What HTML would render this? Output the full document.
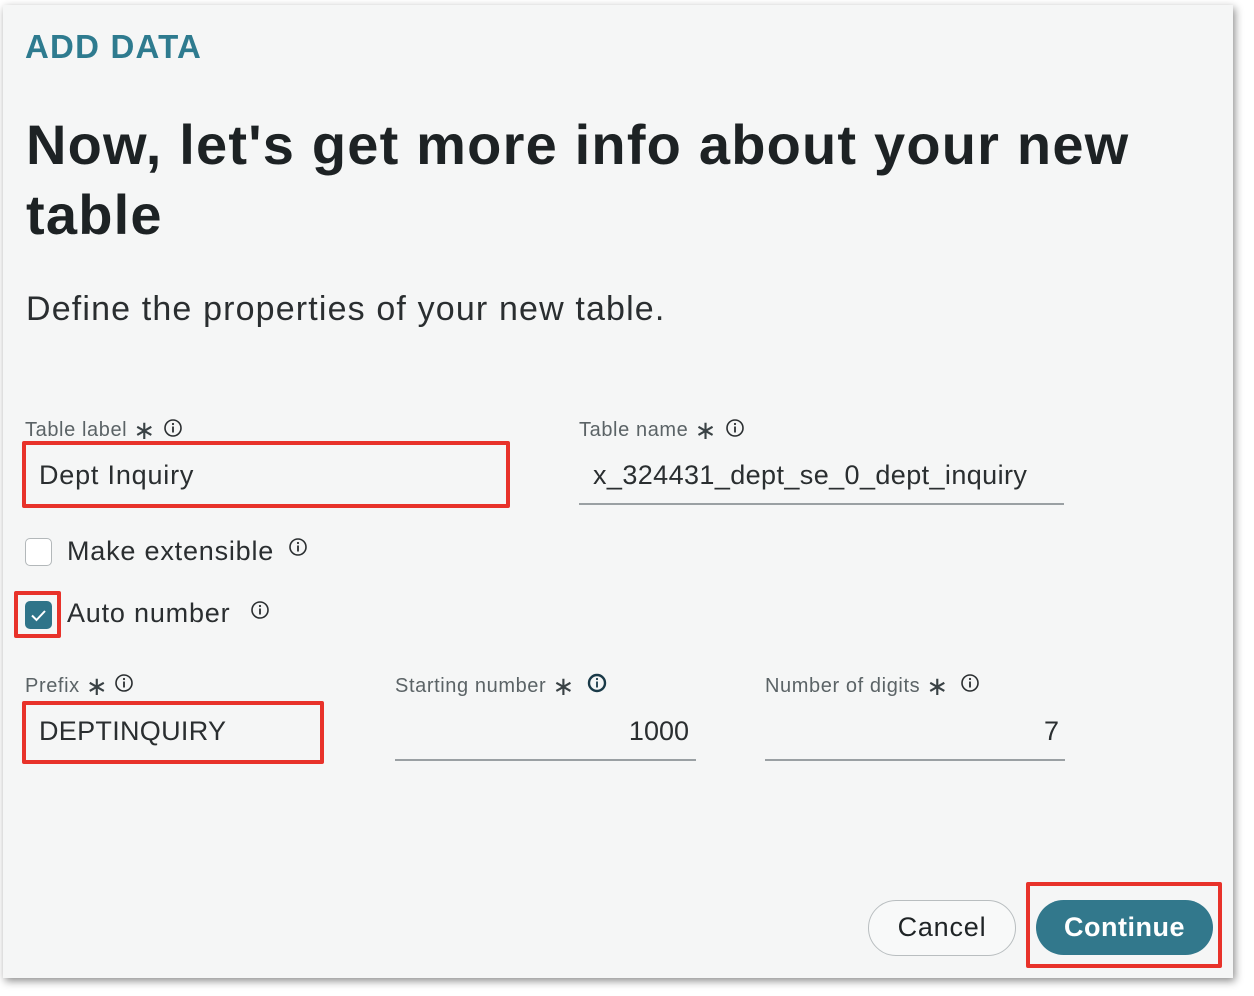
<!DOCTYPE html>
<html><head><meta charset="utf-8"><style>
*{margin:0;padding:0;box-sizing:border-box}
body{width:1254px;height:996px;background:#fff;position:relative;overflow:hidden;font-family:"Liberation Sans",sans-serif;color:#1f2426}
.panel{position:absolute;left:3px;top:5px;width:1230px;height:973px;background:#f5f6f6;box-shadow:2px 3px 8px rgba(0,0,0,.45)}
.a{position:absolute;white-space:nowrap}
.lbl{font-size:20px;color:#5b6366;letter-spacing:0.6px}
.lbl b{font-weight:normal;font-size:26px;color:#3a4245;vertical-align:-3px}
.val{font-size:27px;color:#2a2e30;letter-spacing:0.8px}
.line{position:absolute;height:2px;background:#9aa0a3}
.red{position:absolute;border:4px solid #e8322a;border-radius:2px}
svg{position:absolute}
</style></head><body>
<div class="panel"></div>
<div class="a" style="left:25px;top:28px;font-size:33px;font-weight:bold;color:#2e7b8f;letter-spacing:1.2px">ADD DATA</div>
<div class="a" style="left:26px;top:110px;font-size:56px;font-weight:bold;color:#1d2224;line-height:70px;letter-spacing:1.2px">Now, let's get more info about your new<br>table</div>
<div class="a" style="left:26px;top:290px;font-size:34px;color:#2a2e30;letter-spacing:1.15px">Define the properties of your new table.</div>

<div class="a lbl" style="left:25px;top:415px">Table label <b>∗</b></div>
<svg style="left:163px;top:418px" width="20" height="20" viewBox="0 0 20 20"><circle cx="10" cy="10" r="8" fill="none" stroke="#2a2e30" stroke-width="1.6"/><rect x="9.1" y="8.5" width="1.8" height="6" fill="#2a2e30"/><circle cx="10" cy="6" r="1.1" fill="#2a2e30"/></svg>
<div class="red" style="left:22px;top:441px;width:488px;height:67px"></div>
<div class="a val" style="left:39px;top:460px">Dept Inquiry</div>

<div class="a lbl" style="left:579px;top:415px">Table name <b>∗</b></div>
<svg style="left:725px;top:418px" width="20" height="20" viewBox="0 0 20 20"><circle cx="10" cy="10" r="8" fill="none" stroke="#2a2e30" stroke-width="1.6"/><rect x="9.1" y="8.5" width="1.8" height="6" fill="#2a2e30"/><circle cx="10" cy="6" r="1.1" fill="#2a2e30"/></svg>
<div class="a val" style="left:593px;top:460px;letter-spacing:0.4px">x_324431_dept_se_0_dept_inquiry</div>
<div class="line" style="left:579px;top:503px;width:485px"></div>

<div class="a" style="left:25px;top:538px;width:27px;height:28px;border:1.5px solid #b3b8ba;border-radius:5px;background:#fff"></div>
<div class="a val" style="left:67px;top:536px">Make extensible</div>
<svg style="left:288px;top:537px" width="20" height="20" viewBox="0 0 20 20"><circle cx="10" cy="10" r="8" fill="none" stroke="#2a2e30" stroke-width="1.6"/><rect x="9.1" y="8.5" width="1.8" height="6" fill="#2a2e30"/><circle cx="10" cy="6" r="1.1" fill="#2a2e30"/></svg>

<div class="red" style="left:14px;top:591px;width:47px;height:47px"></div>
<div class="a" style="left:25px;top:601px;width:27px;height:28px;border-radius:5px;background:#2f7489"></div>
<svg style="left:25px;top:601px" width="27" height="28" viewBox="0 0 27 28"><path d="M7 14.5l4.5 4.5 8.5-9" fill="none" stroke="#fff" stroke-width="2"/></svg>
<div class="a val" style="left:67px;top:598px">Auto number</div>
<svg style="left:250px;top:600px" width="20" height="20" viewBox="0 0 20 20"><circle cx="10" cy="10" r="8" fill="none" stroke="#2a2e30" stroke-width="1.6"/><rect x="9.1" y="8.5" width="1.8" height="6" fill="#2a2e30"/><circle cx="10" cy="6" r="1.1" fill="#2a2e30"/></svg>

<div class="a lbl" style="left:25px;top:671px">Prefix <b>∗</b></div>
<svg style="left:114px;top:673px" width="20" height="20" viewBox="0 0 20 20"><circle cx="10" cy="10" r="8" fill="none" stroke="#2a2e30" stroke-width="1.6"/><rect x="9.1" y="8.5" width="1.8" height="6" fill="#2a2e30"/><circle cx="10" cy="6" r="1.1" fill="#2a2e30"/></svg>
<div class="red" style="left:22px;top:701px;width:302px;height:63px"></div>
<div class="a val" style="left:39px;top:716px;letter-spacing:0.3px">DEPTINQUIRY</div>

<div class="a lbl" style="left:395px;top:671px">Starting number <b>∗</b></div>
<svg style="left:587px;top:673px" width="20" height="20" viewBox="0 0 20 20"><circle cx="10" cy="10" r="8" fill="none" stroke="#1a3a48" stroke-width="2.4"/><rect x="9.1" y="8.5" width="1.8" height="6" fill="#1a3a48"/><circle cx="10" cy="6" r="1.1" fill="#1a3a48"/></svg>
<div class="a val" style="left:395px;top:716px;width:294px;text-align:right;letter-spacing:0">1000</div>
<div class="line" style="left:395px;top:759px;width:301px"></div>

<div class="a lbl" style="left:765px;top:671px">Number of digits <b>∗</b></div>
<svg style="left:960px;top:673px" width="20" height="20" viewBox="0 0 20 20"><circle cx="10" cy="10" r="8" fill="none" stroke="#2a2e30" stroke-width="1.6"/><rect x="9.1" y="8.5" width="1.8" height="6" fill="#2a2e30"/><circle cx="10" cy="6" r="1.1" fill="#2a2e30"/></svg>
<div class="a val" style="left:765px;top:716px;width:294px;text-align:right;letter-spacing:0">7</div>
<div class="line" style="left:765px;top:759px;width:300px"></div>

<div class="a" style="left:868px;top:900px;width:148px;height:56px;border:1.5px solid #b9bec0;border-radius:28px;background:#f8f9f9;font-size:27px;text-align:center;line-height:53px;color:#1f2426;letter-spacing:0.8px">Cancel</div>
<div class="red" style="left:1026px;top:882px;width:196px;height:86px"></div>
<div class="a" style="left:1036px;top:900px;width:177px;height:55px;border-radius:28px;background:#32788c;color:#fff;font-size:27px;font-weight:bold;text-align:center;line-height:55px;letter-spacing:0.5px">Continue</div>
</body></html>
